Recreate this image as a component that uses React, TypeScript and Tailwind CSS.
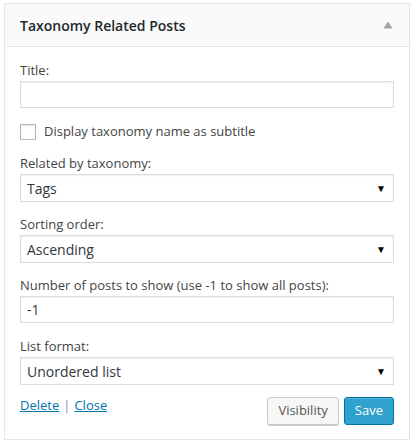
import React from "react";

function Label({ children }: { children: React.ReactNode }) {
  return <div className="text-[13px] leading-[19px] text-[#444]">{children}</div>;
}

function Select({ value }: { value: string }) {
  return (
    <div className="mt-[1px] flex h-[28px] items-center justify-between border border-[#ddd] bg-white pl-[6px] pr-[7px] shadow-[inset_0_1px_2px_rgba(0,0,0,0.07)]">
      <span className="text-[14px] text-[#32373c]">{value}</span>
      <span className="text-[10px] leading-none text-black">▼</span>
    </div>
  );
}

export default function App() {
  return (
    <div className="h-[446px] w-[414px] bg-white pt-[3px] pl-[4px] font-['Open_Sans',sans-serif]">
      <div className="w-[406px] border border-[#e5e5e5] bg-white">
        {/* header */}
        <div className="flex h-[43px] items-center justify-between border-b border-[#e5e5e5] bg-[#fafafa] pl-[15px] pr-[16px]">
          <span className="text-[14px] font-semibold text-[#23282d]">Taxonomy Related Posts</span>
          <svg width="10" height="8" viewBox="0 0 10 8">
            <path d="M5 0.5 L9.5 7.5 L0.5 7.5 Z" fill="#a0a5aa" />
          </svg>
        </div>

        <div className="px-[15px] pt-[14px] pb-[14px]">
          <Label>Title:</Label>
          <div className="mt-[1px] h-[27px] border border-[#ddd] bg-white shadow-[inset_0_1px_2px_rgba(0,0,0,0.07)]" />

          <div className="mt-[14px] flex items-center">
            <div className="h-[16px] w-[16px] border border-[#b4b9be] bg-white shadow-[inset_0_1px_2px_rgba(0,0,0,0.1)]" />
            <span className="ml-[8px] text-[13px] leading-[19px] text-[#444]">Display taxonomy name as subtitle</span>
          </div>

          <div className="mt-[13px]">
            <Label>Related by taxonomy:</Label>
            <Select value="Tags" />
          </div>

          <div className="mt-[13px]">
            <Label>Sorting order:</Label>
            <Select value="Ascending" />
          </div>

          <div className="mt-[13px]">
            <Label>Number of posts to show (use -1 to show all posts):</Label>
            <div className="mt-[1px] flex h-[27px] items-center border border-[#ddd] bg-white pl-[6px] shadow-[inset_0_1px_2px_rgba(0,0,0,0.07)]">
              <span className="text-[14px] text-[#32373c]">-1</span>
            </div>
          </div>

          <div className="mt-[14px]">
            <Label>List format:</Label>
            <Select value="Unordered list" />
          </div>

          <div className="mt-[12px] flex items-start justify-between">
            <div className="-mt-[1px] text-[13px] leading-[19px]">
              <a className="text-[#0073aa] underline">Delete</a>
              <span className="mx-[4px] text-[#8e7fb0]">|</span>
              <a className="text-[#0073aa] underline">Close</a>
            </div>
            <div className="flex gap-[5px]">
              <button className="h-[28px] rounded-[3px] border border-[#ccc] bg-[#f7f7f7] px-[10px] text-[13px] text-[#555] shadow-[0_1px_0_#ccc]">
                Visibility
              </button>
              <button className="h-[28px] rounded-[3px] border border-[#0074a2] bg-[#2ea2cc] px-[10px] text-[13px] text-white shadow-[inset_0_1px_0_rgba(120,200,230,0.5)]">
                Save
              </button>
            </div>
          </div>
        </div>
      </div>
    </div>
  );
}
